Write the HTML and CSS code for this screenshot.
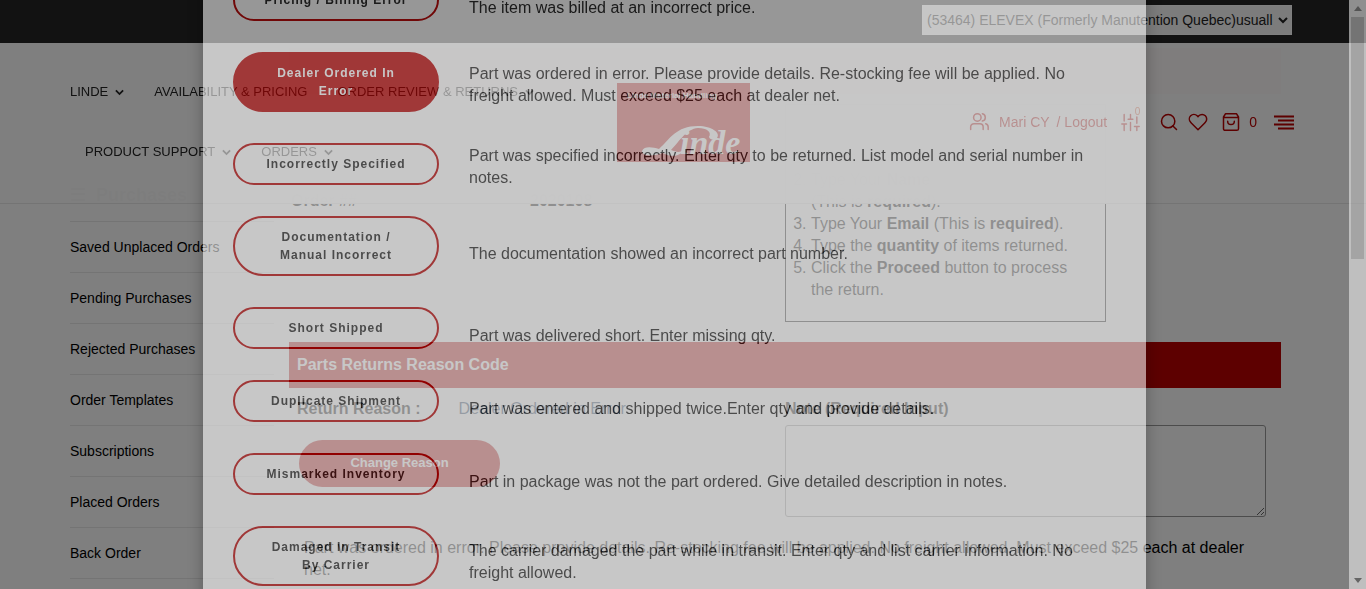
FILE: index.html
```html
<!DOCTYPE html>
<html lang="en">
<head>
<meta charset="utf-8">
<meta name="viewport" content="width=device-width, initial-scale=1">
<title>Parts Returns</title>
<link rel="stylesheet" href="styles.css">
</head>
<body>
<header class="site-header">
  <div class="topbar">
    <select class="account" aria-label="Account">
      <option>(53464) ELEVEX (Formerly Manutention Quebec)usuall</option>
    </select>
  </div>
  <div class="masthead">
    <nav class="nav" aria-label="Main">
      <a class="nav-item" href="#">LINDE<svg class="chevron" viewBox="0 0 10 7"><path d="M1 1.2l4 4 4-4"/></svg></a>
      <a class="nav-item" href="#">AVAILABILITY &amp; PRICING</a>
      <a class="nav-item" href="#">ORDER REVIEW &amp; RETURNS<svg class="chevron" viewBox="0 0 10 7"><path d="M1 1.2l4 4 4-4"/></svg></a>
      <a class="nav-item" href="#">PRODUCT SUPPORT<svg class="chevron" viewBox="0 0 10 7"><path d="M1 1.2l4 4 4-4"/></svg></a>
      <a class="nav-item" href="#">ORDERS<svg class="chevron" viewBox="0 0 10 7"><path d="M1 1.2l4 4 4-4"/></svg></a>
    </nav>
    <a class="logo" href="#" aria-label="Linde Material Handling">
      <svg viewBox="0 0 133 79" width="133" height="79">
        <rect width="133" height="79" fill="#ba0000"/>
        <text x="10" y="15" class="logo-tag">Linde Material Handling</text>
        <path d="M25 68 C27 63 35 64 42 66 C53 56 59 43 81 43 C95 43 104 50 100 55 C98 58 93 57 92 54 C95 49 90 45 81 45 C69 46 63 58 54 67 C59 69 62 70 67 67 C63 73 55 75 46 70 C38 73 25 74 25 68Z" fill="#fff"/>
        <text x="63" y="71" class="logo-word">inde</text>
      </svg>
    </a>
    <div class="tools">
      <svg class="icon" viewBox="0 0 24 24" width="20" height="20"><path d="M17 21v-3a4 4 0 0 0-4-4H6a4 4 0 0 0-4 4v3M23 21v-3a4 4 0 0 0-3-3.9M16 2.1a4.5 4.5 0 0 1 0 8.8"/><circle cx="10" cy="6.5" r="4.5"/></svg>
      <a class="tool-name" href="#">Mari CY</a>
      <a class="tool-logout" href="#">/ Logout</a>
      <a class="tool-compare" href="#" aria-label="Compare"><svg class="icon" viewBox="0 0 24 24" width="19" height="19"><path d="M4 22v-8M4 10V2M12 22V12M12 8V2M20 22v-5M20 13V5M1 14h6M9 8h6M17 17h6"/></svg><span class="count">0</span></a>
      <a class="tool-search" href="#" aria-label="Search"><svg class="icon" viewBox="0 0 24 24" width="20" height="20"><circle cx="11" cy="11" r="8"/><path d="M21 21l-4.3-4.3"/></svg></a>
      <a class="tool-heart" href="#" aria-label="Wish list"><svg class="icon" viewBox="0 0 24 24" width="20" height="20"><path d="M20.8 4.6a5.5 5.5 0 0 0-7.8 0L12 5.7l-1-1.1a5.5 5.5 0 0 0-7.8 7.8l1 1.1L12 21.2l7.8-7.8 1-1a5.5 5.5 0 0 0 0-7.8z"/></svg></a>
      <a class="tool-cart" href="#"><svg class="icon" viewBox="0 0 24 24" width="20" height="20"><path d="M5.5 2h13L21 6v14a2 2 0 0 1-2 2H5a2 2 0 0 1-2-2V6zM3 6.500h18M16 11a4 4 0 0 1-8 0"/></svg><span>0</span></a>
      <a class="tool-menu" href="#" aria-label="Menu"><svg class="menu-icon" viewBox="0 0 20 15" width="20" height="15"><path d="M0 1.500h20M4 5.500h16M0 9.500h20M4 13.500h16"/></svg></a>
    </div>
  </div>
</header>

<main class="page">
  <aside class="sidebar">
    <h2 class="side-title">&#9776;&nbsp; Purchases</h2>
    <ul class="side-list">
      <li><a href="#">Saved Unplaced Orders</a></li>
      <li><a href="#">Pending Purchases</a></li>
      <li><a href="#">Rejected Purchases</a></li>
      <li><a href="#">Order Templates</a></li>
      <li><a href="#">Subscriptions</a></li>
      <li><a href="#">Placed Orders</a></li>
      <li><a href="#">Back Order</a></li>
    </ul>
  </aside>
  <section class="content">
    <div class="bar"></div>
    <div class="overview">
      <dl class="order"><dt>Order ##</dt><dd>2020108</dd></dl>
      <div class="steps">
        <ol>
          <li>Select the items.</li>
          <li>Type Your <b>Name</b><br>(This is <b>required</b>).</li>
          <li>Type Your <b>Email</b> (This is <b>required</b>).</li>
          <li>Type the <b>quantity</b> of items returned.</li>
          <li>Click the <b>Proceed</b> button to process the return.</li>
        </ol>
      </div>
    </div>
    <h3 class="bar">Parts Returns Reason Code</h3>
    <div class="reason-form">
      <div class="reason">
        <p class="chosen"><b>Return Reason :</b><span>Dealer Ordered in Error</span></p>
        <button class="change" type="button">Change Reason</button>
      </div>
      <div class="note">
        <label for="note">Note (Required Input)</label>
        <textarea id="note"></textarea>
      </div>
    </div>
    <p class="explain">Part was ordered in error. Please provide details. Re-stocking fee will be applied. No freight allowed. Must exceed $25 each at dealer net.</p>
  </section>
</main>

<div class="backdrop"></div>
<div class="modal" role="dialog" aria-label="Return reasons">
  <div class="dialog">
    <div class="choice"><button type="button">Pricing / Billing Error</button><p>The item was billed at an incorrect price.</p></div>
    <div class="choice choice-raised"><button class="active" type="button">Dealer Ordered In Error</button><p>Part was ordered in error. Please provide details. Re-stocking fee will be applied. No freight allowed. Must exceed $25 each at dealer net.</p></div>
    <div class="choice choice-top"><button type="button">Incorrectly Specified</button><p>Part was specified incorrectly. Enter qty to be returned. List model and serial number in notes.</p></div>
    <div class="choice choice-lowered"><button type="button">Documentation / Manual Incorrect</button><p>The documentation showed an incorrect part number.</p></div>
    <div class="choice"><button type="button">Short Shipped</button><p>Part was delivered short. Enter missing qty.</p></div>
    <div class="choice"><button type="button">Duplicate Shipment</button><p>Part was entered and shipped twice.Enter qty and provide details.</p></div>
    <div class="choice"><button type="button">Mismarked Inventory</button><p>Part in package was not the part ordered. Give detailed description in notes.</p></div>
    <div class="choice choice-middle"><button type="button">Damaged In Transit By Carrier</button><p>The carrier damaged the part while in transit. Enter qty and list carrier information. No freight allowed.</p></div>
  </div>
  <div class="scrollbar">
    <span class="arrow arrow-up"></span>
    <span class="thumb"></span>
    <span class="arrow arrow-down"></span>
  </div>
</div>
</body>
</html>
```
FILE: styles.css
```css
* { box-sizing: border-box; }

body {
  margin: 0;
  height: 100vh;
  overflow: hidden;
  background: #fff;
  color: #000;
  font: 16px/22px "Liberation Sans", Arial, sans-serif;
}

a { color: inherit; text-decoration: none; }
p, h2, h3, ul, dl, dd { margin: 0; }

/* Header */
.site-header {
  position: fixed;
  top: 0;
  left: 0;
  right: 0;
  z-index: 1;
}

.topbar {
  display: flex;
  justify-content: flex-end;
  padding: 5px 74px 8px;
  background: #242424;
}

.account {
  width: 370px;
  height: 30px;
  padding: 0;
  border: 1px solid #fff;
  border-radius: 0;
  background: #f8f8f8;
  color: #222;
  font: 14px "Liberation Sans", Arial, sans-serif;
}

.masthead {
  display: grid;
  grid-template-columns: 1fr auto 1fr;
  align-items: center;
  padding: 19px 70px 21px;
  border-bottom: 1px solid #e8e8e8;
  background: rgba(255, 255, 255, .985);
}

.nav { display: flex; flex-wrap: wrap; }

.nav-item {
  display: flex;
  align-items: center;
  gap: 7px;
  padding: 0 15px;
  color: #222;
  font-size: 13px;
  line-height: 60px;
}

.nav-item:first-child { padding-left: 0; }

.chevron {
  width: 9px;
  height: 7px;
  fill: none;
  stroke: currentColor;
  stroke-width: 2;
}

.logo svg { display: block; }

.logo-tag { font: bold 8px "Liberation Sans", Arial, sans-serif; fill: #fff; }
.logo-word { font: italic bold 34px "Liberation Serif", serif; fill: #fff; }

.tools {
  display: flex;
  align-items: center;
  justify-content: flex-end;
  padding-right: 2px;
  color: #ba0000;
  font-size: 14px;
}

.icon {
  display: block;
  fill: none;
  stroke: currentColor;
  stroke-width: 1.8;
  stroke-linecap: round;
  stroke-linejoin: round;
}

.menu-icon {
  display: block;
  fill: none;
  stroke: currentColor;
  stroke-width: 2;
}

.tool-name { margin-left: 10px; }
.tool-logout { margin-left: 7px; }
.tool-compare { position: relative; margin-left: 14px; }
.count { position: absolute; top: -7px; right: 0; font-size: 10px; line-height: 12px; color: #d84a20; }
.tool-search { margin-left: 19px; }
.tool-heart { margin-left: 9px; }
.tool-cart { display: flex; align-items: center; gap: 8px; margin-left: 13px; }
.tool-menu { margin-left: 17px; }

/* Page */
.page {
  display: grid;
  grid-template-columns: 204px 1fr;
  gap: 15px;
  padding: 48px 85px 0 70px;
}

.sidebar { padding-top: 122px; }

.side-title {
  font-size: 18px;
  line-height: 51px;
}

.side-list { padding: 0; list-style: none; }

.side-list li {
  border-top: 1px solid #e8e8e8;
  font-size: 14px;
  line-height: 50px;
}

.side-list li:last-child { border-bottom: 1px solid #e8e8e8; }

.bar {
  height: 46px;
  padding: 0 8px;
  background: #ba0000;
  color: #fff;
  font-size: 16px;
  line-height: 46px;
}

.overview {
  display: grid;
  grid-template-columns: 1fr 1fr;
  margin: 10px 0 20px;
}

.order {
  display: grid;
  grid-template-columns: 239px 1fr;
  padding: 86px 0 0 2px;
  font-weight: bold;
}

.steps {
  width: 321px;
  padding: 42px 24px 20px;
  border: 1px solid #000;
}

.steps ol { margin: 0; padding-left: 1px; }

.reason-form {
  display: grid;
  grid-template-columns: 1fr 1fr;
  padding-top: 10px;
}

.reason { padding-left: 8px; }

.chosen { display: flex; gap: 38px; }
.chosen span { color: #1b3a5c; }

.change {
  width: 201px;
  height: 47px;
  margin: 20px 2px 0;
  padding: 0 0 2px;
  border: 0;
  border-radius: 24px;
  background: #ba0000;
  color: #fff;
  font: bold 13px "Liberation Sans", Arial, sans-serif;
}

.note { padding-right: 15px; font-weight: bold; }
.note label { display: block; }

.note textarea {
  display: block;
  width: 100%;
  height: 92px;
  margin-top: 5px;
  border: 1px solid #999;
  border-radius: 3px;
}

.explain { padding: 20px 30px 0 15px; }

/* Modal */
.backdrop {
  position: fixed;
  inset: 0;
  z-index: 2;
  background: rgba(0, 0, 0, .5);
}

.modal {
  position: fixed;
  inset: 0;
  z-index: 3;
  display: flex;
  overflow: hidden;
  opacity: .56;
}

.dialog {
  flex: 1;
  align-self: flex-start;
  min-height: 660px;
  margin: -51px 203px 0;
  padding: 30px;
  background: #fff;
  box-shadow: 0 5px 15px rgba(0, 0, 0, .5);
  color: #222;
}

.choice {
  display: grid;
  grid-template-columns: 206px minmax(0, 640px);
  gap: 30px;
  align-items: start;
}

.choice p { padding-top: 18px; }
.choice-raised p { padding-top: 11px; }
.choice-top p { padding-top: 2px; }
.choice-lowered p { padding-top: 27px; }
.choice-middle p { padding-top: 14px; }

.choice button {
  margin: 0 0 31px;
  padding: 10px 28px;
  border: 2px solid #ba0000;
  border-radius: 30px;
  background: transparent;
  color: #222;
  font: bold 12px/18px "Liberation Sans", Arial, sans-serif;
  letter-spacing: 1px;
}

.choice .active { background: #ba0000; color: #fff; }

.scrollbar {
  display: flex;
  flex-direction: column;
  align-items: center;
  width: 17px;
  padding: 6px 0;
  gap: 6px;
  background: #f1f1f1;
}

.thumb { width: 13px; height: 242px; background: #c1c1c1; }

.arrow { border: 4px solid transparent; }
.arrow-up { border-top: 0; border-bottom: 5px solid #888; }
.arrow-down { margin-top: auto; border-bottom: 0; border-top: 5px solid #505050; }
```
